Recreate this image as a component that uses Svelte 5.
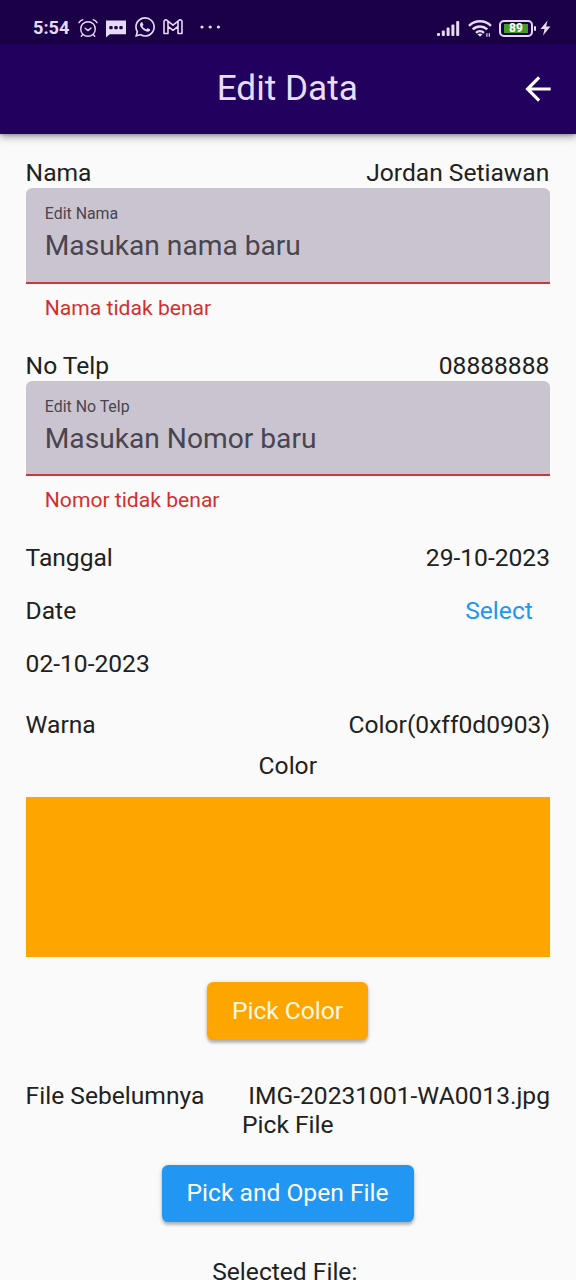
<script>
  const fields = [
    { name: 'Nama', value: 'Jordan Setiawan', label: 'Edit Nama', hint: 'Masukan nama baru', error: 'Nama tidak benar' },
    { name: 'No Telp', value: '08888888', label: 'Edit No Telp', hint: 'Masukan Nomor baru', error: 'Nomor tidak benar' }
  ];
</script>

<div class="screen">
  <div class="status">
    <span class="time">5:54</span>
    <svg class="alarm" width="20" height="20" viewBox="0 0 20 20" fill="none" stroke="currentColor" stroke-width="1.400" stroke-linecap="round" stroke-linejoin="round">
      <circle cx="10" cy="11" r="7.300" /><path d="M7.200 10.200l2.800 2.400 3-2.600M1 4.700Q2.300 2.600 4.800 1.700M19 4.700Q17.700 2.600 15.200 1.700M4.700 16.500l-1.400 1.700M15.300 16.500l1.400 1.700" />
    </svg>
    <svg class="chat" width="20" height="18" viewBox="0 0 20 18">
      <path d="M0 .5h20v13.800H3.800L0 17.600z" fill="currentColor" /><g fill="#19053f"><rect x="3.300" y="6" width="3.400" height="3.200" rx="1" /><rect x="8.300" y="6" width="3.400" height="3.200" rx="1" /><rect x="13.300" y="6" width="3.400" height="3.200" rx="1" /></g>
    </svg>
    <svg class="phone" width="20" height="20" viewBox="2 2 20 20" fill="currentColor">
      <path d="M19.050 4.910A9.820 9.820 0 0 0 12.040 2c-5.460 0-9.910 4.450-9.910 9.910 0 1.750.46 3.450 1.320 4.950L2.050 22l5.250-1.380c1.450.79 3.080 1.210 4.740 1.210 5.460 0 9.910-4.450 9.910-9.910 0-2.650-1.030-5.140-2.900-7.010zm-7.010 15.240c-1.480 0-2.930-.4-4.200-1.150l-.3-.18-3.120.82.83-3.040-.2-.31a8.260 8.260 0 0 1-1.260-4.380c0-4.540 3.700-8.240 8.240-8.240a8.240 8.240 0 0 1 8.250 8.240c0 4.550-3.700 8.240-8.240 8.240zm4.520-6.160c-.25-.12-1.470-.72-1.690-.81-.23-.08-.39-.12-.56.12-.17.25-.64.81-.78.97-.14.17-.29.19-.54.06-.25-.12-1.050-.39-1.990-1.230-.74-.66-1.230-1.470-1.380-1.720-.14-.25-.02-.38.11-.51.11-.11.25-.29.37-.43.12-.14.17-.25.25-.41.08-.17.04-.31-.02-.43-.06-.12-.56-1.340-.76-1.840-.2-.48-.41-.42-.56-.43h-.48c-.17 0-.43.06-.66.31-.22.25-.86.85-.86 2.070 0 1.220.89 2.400 1.010 2.560.12.17 1.750 2.670 4.230 3.740.59.26 1.050.41 1.410.52.59.19 1.130.16 1.560.1.48-.07 1.470-.6 1.670-1.180.21-.58.21-1.070.14-1.180-.06-.1-.22-.16-.47-.28z" />
    </svg>
    <svg class="mail" width="20" height="16" viewBox="0 0 20 16" fill="none" stroke="currentColor" stroke-width="1.600" stroke-linejoin="round">
      <path d="M1 14.500V2.700c0-1.800 1.800-2.400 3-1.400l6 4.800 6-4.800c1.200-1 3-.4 3 1.400v11.800h-4V7.300l-5 4-5-4v7.200zM5 7.300V2.200M15 7.300V2.200" />
    </svg>
    <svg class="more" width="21" height="4" viewBox="0 0 21 4" fill="currentColor"><circle cx="2" cy="2" r="1.600" /><circle cx="10.200" cy="2" r="1.600" /><circle cx="18.400" cy="2" r="1.600" /></svg>
    <svg class="signal" width="23" height="17" viewBox="0 0 23 17" fill="currentColor">
      <rect x="0" y="13" width="3" height="3" rx="1" /><rect x="4.800" y="10.500" width="3" height="5.500" rx="1" /><rect x="9.600" y="7.500" width="3" height="8.500" rx="1" /><rect x="14.400" y="4.500" width="3" height="11.500" rx="1" /><rect x="19.200" y="1" width="3" height="15" rx="1" />
    </svg>
    <svg class="wifi" width="24" height="18" viewBox="0 0 24 18" fill="none" stroke="currentColor" stroke-width="2.500">
      <path d="M1 5.800C7.200-.2 16.800-.2 23 5.800M4.700 9.400c4.200-3.800 10.400-3.800 14.600 0M8 12.800c2.300-2.100 5.700-2.100 8 0" /><path d="M9.500 14.300c1.500-1.100 3.500-1.100 5 0L12 16.800z" fill="currentColor" stroke="none" /><path d="M18.900 16.800v-3.600M21.300 13.200v3.600" stroke-width="1.200" />
    </svg>
    <div class="battery"><span>89</span></div>
    <svg class="bolt" width="11" height="16" viewBox="0 0 11 16" fill="currentColor"><path d="M7.500.5L.5 9h4L3 15.500 10.500 6.500H6.200z" /></svg>
  </div>

  <header>
    <h1>Edit Data</h1>
    <svg width="38" height="38" viewBox="0 0 24 24" fill="#fff"><path d="M20 11H7.830l5.590-5.590L12 4l-8 8 8 8 1.410-1.410L7.830 13H20z" /></svg>
  </header>

  <main>
    {#each fields as field}
      <section class="entry">
        <div class="row"><span>{field.name}</span><span>{field.value}</span></div>
        <div class="field">
          <span class="label">{field.label}</span>
          <span class="hint">{field.hint}</span>
        </div>
        <div class="error">{field.error}</div>
      </section>
    {/each}

    <div class="row"><span>Tanggal</span><span>29-10-2023</span></div>
    <div class="row date"><span>Date</span><span class="select">Select</span></div>
    <div class="row picked"><span>02-10-2023</span></div>
    <div class="row warna"><span>Warna</span><span>Color(0xff0d0903)</span></div>
    <div class="caption color">Color</div>
    <div class="swatch"></div>
    <button class="orange">Pick Color</button>
    <div class="row"><span>File Sebelumnya</span><span>IMG-20231001-WA0013.jpg</span></div>
    <div class="caption">Pick File</div>
    <button class="blue">Pick and Open File</button>
    <div class="caption selected">Selected File:</div>
  </main>
</div>

<style>
  :global(body) { margin: 0; background: #fafafa; }
  .screen {
    width: 576px; height: 1280px; overflow: hidden; background: #fafafa;
    font-family: Roboto, sans-serif; font-size: 24.600px; line-height: 29px; color: #212121;
    display: flex; flex-direction: column;
  }
  .status {
    height: 44px; flex: none; box-sizing: border-box; padding: 0 25px 0 33px;
    background: #1b0047; color: #e6daf4; display: flex; align-items: center;
  }
  .status svg { flex: none; display: block; }
  .time { font-size: 18.200px; font-weight: 700; width: 45px; padding-top: 12px; line-height: 20px; white-space: nowrap; }
  .alarm { margin-top: 11px; }
  .chat { margin: 13px 0 0 8px; }
  .phone { margin: 10px 0 0 9px; }
  .mail { margin: 10px 0 0 8px; }
  .more { margin: 10px 0 0 17px; }
  .signal { margin: 12px 0 0 auto; }
  .wifi { margin: 13px 0 0 8px; }
  .battery {
    position: relative; box-sizing: border-box; width: 34px; height: 17px; margin: 12px 0 0 7px;
    border: 2px solid currentColor; border-radius: 5px; padding: 2px 3px;
  }
  .battery span { display: block; height: 9px; background: #459b27; font-size: 12px; line-height: 9px; font-weight: 700; text-align: center; color: #fff; }
  .battery::after { content: ''; position: absolute; right: -5px; top: 4px; width: 2px; height: 5px; background: currentColor; border-radius: 1px; }
  .bolt { margin: 12px 0 0 7px; }
  header {
    height: 89.500px; flex: none; background: #22005d; color: #e9ddff; position: relative; z-index: 1;
    display: grid; grid-template-columns: 1fr auto 1fr; align-items: center;
    box-shadow: 0 3px 8px rgba(0, 0, 0, .35), 0 1px 3px rgba(0, 0, 0, .2);
  }
  h1 { grid-column: 2; margin: 0; padding: 0 1.500px 2px 0; font-size: 35.200px; line-height: 42px; font-weight: 400; }
  header svg { justify-self: end; margin-right: 19.500px; }
  main { flex: none; padding: 24.500px 26px 0 25.600px; display: flex; flex-direction: column; }
  .entry { height: 192.500px; }
  .row { display: flex; justify-content: space-between; height: 29px; white-space: nowrap; }
  .entry .row { height: 30px; }
  .entry .row span:last-child { padding-right: .7px; }
  .field {
    box-sizing: border-box; height: 95.500px; padding: 15px 19.200px 0; background: #cac4d0; color: #49454f;
    border-radius: 6.400px 6.400px 0 0; border-bottom: 2px solid #c9393a;
    display: flex; flex-direction: column;
  }
  .label { font-size: 15.900px; line-height: 22px; }
  .hint { font-size: 28.160px; line-height: 42.500px; }
  .error { padding: 11px 19.200px 0; font-size: 21.120px; line-height: 25px; color: #d32f2f; }
  .date { margin-top: 24px; }
  .select { color: #2196f3; margin-right: 17.200px; }
  .picked { margin-top: 24px; }
  .warna { margin-top: 32px; }
  .caption { text-align: center; height: 29px; }
  .color { margin-top: 12px; }
  .swatch { height: 160px; margin-top: 17px; background: #ffa500; }
  button {
    align-self: center; height: 57.600px; border: 0; padding: 0 25px 1px 24.500px; border-radius: 6.400px; white-space: nowrap;
    font: inherit; color: #fff; box-shadow: 0 3px 3px rgba(0, 0, 0, .22), 0 1px 5px rgba(0, 0, 0, .15);
  }
  .orange { background: #ffa500; margin: 25px 0 41px; color: #fff9e5; }
  .blue { background: #2196f3; margin: 26px 0 34.500px; }
  .selected { padding-right: 6px; }
</style>
